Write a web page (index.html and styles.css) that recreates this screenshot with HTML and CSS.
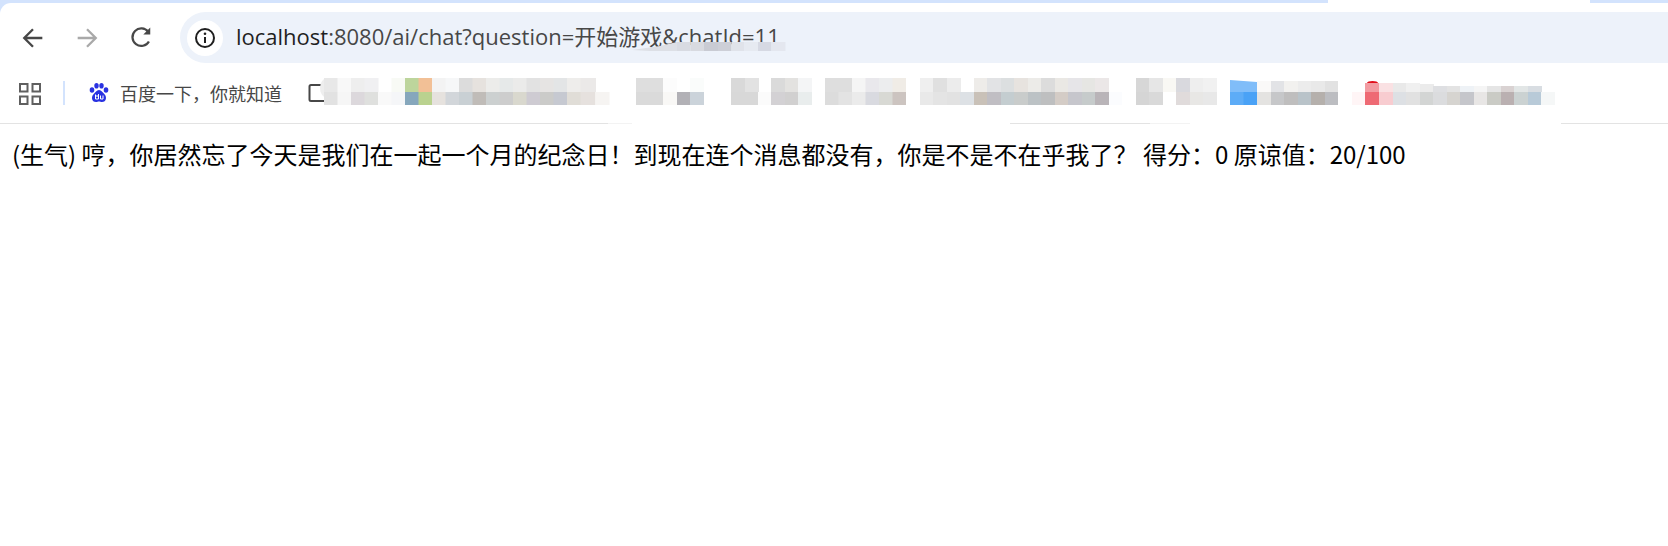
FILE: index.html
```html
<!DOCTYPE html>
<html lang="zh-CN">
<head>
<meta charset="utf-8">
<title>localhost:8080/ai/chat</title>
<link rel="stylesheet" href="styles.css">
</head>
<body>
<header class="chrome">
  <div class="tabstrip"><span class="strip-a"></span><span class="strip-gap"></span><span class="strip-b"></span></div>
  <div class="panel">
    <div class="toolbar">
      <button class="nav"><svg viewBox="0 0 24 24" width="28" height="28"><path d="M20 12H5M12 4.5 4.5 12l7.500 7.500" fill="none" stroke="#474747" stroke-width="2"/></svg></button>
      <button class="nav"><svg viewBox="0 0 24 24" width="28" height="28"><path d="M4 12h15M12 4.500l7.500 7.500-7.500 7.500" fill="none" stroke="#a9a9a9" stroke-width="2"/></svg></button>
      <button class="nav"><svg viewBox="0 0 24 24" width="27" height="27"><path d="M18.600 15.500A7.800 7.800 0 1 1 18 7" fill="none" stroke="#474747" stroke-width="2"/><path d="M19.800 3.200v6.200h-6.200z" fill="#474747"/></svg></button>
      <div class="omnibox">
        <span class="site-info"><svg viewBox="0 0 24 24" width="24" height="24"><circle cx="12" cy="12" r="9" fill="none" stroke="#1f1f1f" stroke-width="2"/><path d="M12 11v6" stroke="#1f1f1f" stroke-width="2"/><circle cx="12" cy="7.800" r="1.300" fill="#1f1f1f"/></svg></span>
        <span class="url"><span class="host">localhost</span>:8080/ai/chat?question=开始游戏&amp;chatId=11</span>
        <svg class="url-mosaic" viewBox="632 42 154 9" width="154" height="9">
          <polygon points="632,50 660,46 677,42 677,51 650,51" fill="#dde0e6"/>
          <rect x="677" y="42" width="13.500" height="9" fill="#d8dbe2"/>
          <rect x="690.500" y="42" width="13.500" height="9" fill="#d8dae0"/>
          <rect x="704" y="42" width="14" height="9" fill="#c9cbd3"/>
          <rect x="718" y="42" width="13.500" height="9" fill="#cdcfd7"/>
          <rect x="731.500" y="42" width="13" height="9" fill="#e0e3ea"/>
          <rect x="744.500" y="42" width="13.500" height="9" fill="#e6eaf1"/>
          <rect x="758" y="42" width="13.500" height="9" fill="#d6d9e3"/>
          <rect x="771.500" y="42" width="14" height="9" fill="#e4e7ef"/>
        </svg>
      </div>
    </div>
    <nav class="bookmarks">
      <svg class="apps" viewBox="0 0 22 22" width="22" height="22"><g fill="none" stroke="#5f5f5f" stroke-width="2"><rect x="1" y="1" width="7.500" height="7.500"/><rect x="13.500" y="1" width="7.500" height="7.500"/><rect x="1" y="13.500" width="7.500" height="7.500"/><rect x="13.500" y="13.500" width="7.500" height="7.500"/></g></svg>
      <span class="divider"></span>
      <a class="bookmark">
        <svg class="paw" viewBox="0 0 20 20" width="20" height="20"><g fill="#2932e1"><ellipse cx="3" cy="7" rx="2.300" ry="2.800"/><ellipse cx="7.500" cy="2.800" rx="2.200" ry="2.800"/><ellipse cx="12.500" cy="2.800" rx="2.200" ry="2.800"/><ellipse cx="17" cy="7" rx="2.300" ry="2.800"/><path d="M10 7c2.500 0 3.500 2.500 5.500 4.200 2.500 2.200 2 7.800-2.500 7.800-1.300 0-2-.5-3-.5s-1.700.5-3 .5c-4.500 0-5-5.600-2.500-7.800C6.500 9.500 7.500 7 10 7z"/></g><path d="M6.500 11.500v4.500h3v-5M6.500 13h3M11.500 12.500v3.500h2.500v-3.500" fill="none" stroke="#fff" stroke-width="1"/></svg>
        百度一下，你就知道
      </a>
      <svg class="mosaic" viewBox="300 76 1270 32" width="1270" height="32">
        <path d="M330 85h-19a1.500 1.500 0 0 0-1.500 1.500v13a1.500 1.500 0 0 0 1.500 1.500h19" fill="none" stroke="#474747" stroke-width="2"/>
        <ellipse cx="327" cy="88" rx="7" ry="10" fill="#eeeeee"/>
        <g>
          <rect x="324" y="78" width="14" height="14" fill="#e8e8e8"/><rect x="337.500" y="78" width="14" height="14" fill="#f8f8f8"/><rect x="351" y="78" width="14" height="14" fill="#eeeeee"/><rect x="364.500" y="78" width="14" height="14" fill="#f0f0f2"/><rect x="391.500" y="78" width="14" height="14" fill="#f8faf5"/><rect x="405" y="78" width="14" height="14" fill="#bdd59c"/><rect x="418.500" y="78" width="14" height="14" fill="#f2c096"/><rect x="432" y="78" width="14" height="14" fill="#f3f3f3"/><rect x="445.500" y="78" width="14" height="14" fill="#f6f7f8"/><rect x="459" y="78" width="14" height="14" fill="#dcdcdc"/><rect x="472.500" y="78" width="14" height="14" fill="#e6e2de"/><rect x="486" y="78" width="14" height="14" fill="#ececea"/><rect x="499.500" y="78" width="14" height="14" fill="#e6e9e9"/><rect x="513" y="78" width="14" height="14" fill="#ebebea"/><rect x="526.500" y="78" width="14" height="14" fill="#e2e2e2"/><rect x="540" y="78" width="14" height="14" fill="#e6e4e3"/><rect x="553.500" y="78" width="14" height="14" fill="#e3e5e6"/><rect x="567" y="78" width="14" height="14" fill="#eeedeb"/><rect x="580.500" y="78" width="15.500" height="14" fill="#ebe9e8"/>
          <rect x="636" y="78" width="27" height="14" fill="#dedede"/><rect x="663" y="78" width="14" height="14" fill="#fcfcfc"/><rect x="690" y="78" width="14" height="14" fill="#fafcfb"/>
          <rect x="731" y="78" width="14" height="14" fill="#d9d9d9"/><rect x="745" y="78" width="14" height="14" fill="#e2e2e2"/><rect x="771" y="78" width="14" height="14" fill="#dadada"/><rect x="785" y="78" width="14" height="14" fill="#e3e2e0"/><rect x="798" y="78" width="14" height="14" fill="#f4f5f6"/>
          <rect x="825" y="78" width="27" height="14" fill="#dedede"/><rect x="852" y="78" width="14" height="14" fill="#f5f5f5"/><rect x="865.500" y="78" width="14" height="14" fill="#e9e8ec"/><rect x="879" y="78" width="14" height="14" fill="#ecedee"/><rect x="892.500" y="78" width="13.500" height="14" fill="#f0ece6"/>
          <rect x="920" y="78" width="13.500" height="14" fill="#efefef"/><rect x="933" y="78" width="14" height="14" fill="#e0e0e0"/><rect x="947" y="78" width="14" height="14" fill="#ececec"/><rect x="974" y="78" width="13.500" height="14" fill="#eeece9"/><rect x="987" y="78" width="14" height="14" fill="#e2e3e5"/><rect x="1001" y="78" width="14" height="14" fill="#dcdfe0"/><rect x="1014" y="78" width="14" height="14" fill="#e7e3df"/><rect x="1028" y="78" width="14" height="14" fill="#ecebe8"/><rect x="1041" y="78" width="14" height="14" fill="#dcdcdc"/><rect x="1055" y="78" width="14" height="14" fill="#eae8e4"/><rect x="1068" y="78" width="14" height="14" fill="#e6e5e8"/><rect x="1082" y="78" width="14" height="14" fill="#e6e6e3"/><rect x="1095" y="78" width="14" height="14" fill="#ebe7e7"/>
          <rect x="1136" y="78" width="13.500" height="14" fill="#d7d7d7"/><rect x="1149" y="78" width="14" height="14" fill="#e6e6e6"/><rect x="1163" y="78" width="13.500" height="14" fill="#f9f8f4"/><rect x="1176" y="78" width="14" height="14" fill="#d9d9de"/><rect x="1190" y="78" width="13.500" height="14" fill="#eeeeee"/><rect x="1203" y="78" width="14" height="14" fill="#f1f1f1"/>
          <polygon points="1230,80 1257,82 1257,92 1230,92" fill="#80bdf9"/>
          <rect x="1257" y="81" width="14" height="11" fill="#faf9f8"/><rect x="1271" y="81" width="13.500" height="11" fill="#e2e3e6"/><rect x="1284" y="81" width="14" height="11" fill="#f2f1ef"/><rect x="1298" y="81" width="13.500" height="11" fill="#ececec"/><rect x="1311" y="81" width="14" height="11" fill="#e9e9e9"/><rect x="1325" y="81" width="13" height="11" fill="#e2e2e2"/>
          <path d="M1367 83a5.500 2 0 0 1 11 0z" fill="#e1101c"/>
          <rect x="1365" y="83" width="14" height="9" fill="#f29ca2"/><rect x="1379" y="83" width="14" height="9" fill="#fae1e3"/><rect x="1393" y="83" width="14" height="9" fill="#e9e9e9"/><rect x="1406" y="83" width="14" height="9" fill="#f0f0f0"/><rect x="1420" y="84" width="14" height="8" fill="#ebebeb"/><rect x="1433" y="86" width="14" height="6" fill="#dedfe2"/><rect x="1447" y="86" width="14" height="6" fill="#e3e3e3"/><rect x="1460" y="86" width="14" height="6" fill="#eef2f6"/><rect x="1474" y="86" width="14" height="6" fill="#f5f5f5"/><rect x="1487" y="86" width="14" height="6" fill="#e5e5e5"/><rect x="1501" y="86" width="14" height="6" fill="#d9d2d2"/><rect x="1514" y="86" width="14" height="6" fill="#e2e6e6"/><rect x="1528" y="86" width="14" height="6" fill="#d8dde2"/>
        </g>
        <g>
          <rect x="324" y="92" width="14" height="13" fill="#e2e2e2"/><rect x="337.500" y="92" width="14" height="13" fill="#f6f6f6"/><rect x="351" y="92" width="14" height="13" fill="#dcd8dc"/><rect x="364.500" y="92" width="14" height="13" fill="#dfe0de"/><rect x="378" y="92" width="14" height="13" fill="#f9f9f9"/><rect x="391.500" y="92" width="14" height="13" fill="#f5f6f8"/><rect x="405" y="92" width="14" height="13" fill="#86a7bc"/><rect x="418.500" y="92" width="14" height="13" fill="#bad28f"/><rect x="432" y="92" width="14" height="13" fill="#e6e2de"/><rect x="445.500" y="92" width="14" height="13" fill="#d2d6da"/><rect x="459" y="92" width="14" height="13" fill="#c9d0d4"/><rect x="472.500" y="92" width="14" height="13" fill="#c0bcb8"/><rect x="486" y="92" width="14" height="13" fill="#ccd0d0"/><rect x="499.500" y="92" width="14" height="13" fill="#cdcdcd"/><rect x="513" y="92" width="14" height="13" fill="#d9d8ce"/><rect x="526.500" y="92" width="14" height="13" fill="#cecbd2"/><rect x="540" y="92" width="14" height="13" fill="#cbcbc9"/><rect x="553.500" y="92" width="14" height="13" fill="#c6c9d1"/><rect x="567" y="92" width="14" height="13" fill="#e0ddd7"/><rect x="580.500" y="92" width="15" height="13" fill="#e6e1de"/><rect x="595.500" y="92" width="14" height="13" fill="#f6f4f2"/>
          <rect x="636" y="92" width="27" height="13" fill="#dadada"/><rect x="663" y="92" width="14" height="13" fill="#f9f8f6"/><rect x="677" y="92" width="13.500" height="13" fill="#b2b1b6"/><rect x="690" y="92" width="14" height="13" fill="#cbd3da"/>
          <rect x="731" y="92" width="27" height="13" fill="#d8d8d8"/><rect x="758" y="92" width="13" height="13" fill="#fbfbfb"/><rect x="771" y="92" width="14" height="13" fill="#d3d1d4"/><rect x="785" y="92" width="14" height="13" fill="#d1d0d0"/><rect x="798" y="92" width="14" height="13" fill="#e9eded"/>
          <rect x="825" y="92" width="14" height="13" fill="#dcdcdc"/><rect x="838.500" y="92" width="14" height="13" fill="#e3e3e3"/><rect x="852" y="92" width="14" height="13" fill="#ebebeb"/><rect x="865.500" y="92" width="14" height="13" fill="#d9dae0"/><rect x="879" y="92" width="14" height="13" fill="#d8d9d4"/><rect x="892.500" y="92" width="13.500" height="13" fill="#ccc4c0"/>
          <rect x="920" y="92" width="13.500" height="13" fill="#e9e9e9"/><rect x="933" y="92" width="14" height="13" fill="#e4e4e4"/><rect x="947" y="92" width="14" height="13" fill="#e2e2e2"/><rect x="960" y="92" width="14" height="13" fill="#dde1e5"/><rect x="974" y="92" width="13.500" height="13" fill="#c9c1b8"/><rect x="987" y="92" width="14" height="13" fill="#c0bec3"/><rect x="1001" y="92" width="14" height="13" fill="#c4cdd0"/><rect x="1014" y="92" width="14" height="13" fill="#c9cccb"/><rect x="1028" y="92" width="14" height="13" fill="#bcc2c5"/><rect x="1041" y="92" width="14" height="13" fill="#bebfc0"/><rect x="1055" y="92" width="14" height="13" fill="#d4ccc6"/><rect x="1068" y="92" width="14" height="13" fill="#c6c6cc"/><rect x="1082" y="92" width="14" height="13" fill="#c6cbcb"/><rect x="1095" y="92" width="14" height="13" fill="#b9b4b8"/><rect x="1109" y="92" width="13" height="13" fill="#fbfcfe"/>
          <rect x="1136" y="92" width="13.500" height="13" fill="#d5d5d5"/><rect x="1149" y="92" width="14" height="13" fill="#d9d9d9"/><rect x="1176" y="92" width="14" height="13" fill="#e0dbdb"/><rect x="1190" y="92" width="13.500" height="13" fill="#e8e7e5"/><rect x="1203" y="92" width="14" height="13" fill="#e8e8e8"/>
          <rect x="1230" y="92" width="14" height="13" fill="#5dacf7"/><rect x="1243.500" y="92" width="14" height="13" fill="#4aa2f6"/><rect x="1257" y="92" width="14" height="13" fill="#e4e3e1"/><rect x="1271" y="92" width="13.500" height="13" fill="#c6c7c9"/><rect x="1284" y="92" width="14" height="13" fill="#bfbebe"/><rect x="1298" y="92" width="13.500" height="13" fill="#b9c3c9"/><rect x="1311" y="92" width="14" height="13" fill="#b5b0ac"/><rect x="1325" y="92" width="13" height="13" fill="#bcbdc1"/>
          <rect x="1352" y="92" width="13" height="13" fill="#fff5f6"/><rect x="1365" y="92" width="14" height="13" fill="#ee6a74"/><rect x="1379" y="92" width="14" height="13" fill="#f8ccd0"/><rect x="1393" y="92" width="14" height="13" fill="#dde0e4"/><rect x="1406" y="92" width="14" height="13" fill="#e1e1e1"/><rect x="1420" y="92" width="14" height="13" fill="#d3d5d4"/><rect x="1433" y="92" width="14" height="13" fill="#dbdcde"/><rect x="1447" y="92" width="14" height="13" fill="#d6d4d0"/><rect x="1460" y="92" width="14" height="13" fill="#c5c6cb"/><rect x="1474" y="92" width="14" height="13" fill="#e8e6e5"/><rect x="1487" y="92" width="14" height="13" fill="#cacbc5"/><rect x="1501" y="92" width="14" height="13" fill="#bab0b1"/><rect x="1514" y="92" width="14" height="13" fill="#cbd2d2"/><rect x="1528" y="92" width="14" height="13" fill="#b8cad8"/><rect x="1541" y="92" width="14" height="13" fill="#f5f7f7"/>
        </g>
      </svg>
    </nav>
  </div>
  <div class="rule"></div>
</header>
<main class="page">
  <p class="reply">(生气) 哼，你居然忘了今天是我们在一起一个月的纪念日！到现在连个消息都没有，你是不是不在乎我了？ 得分：0 原谅值：20/100</p>
</main>
</body>
</html>
```

FILE: styles.css
```css
* { box-sizing: border-box; }
html, body { margin: 0; padding: 0; background: #fff; }
body { width: 1668px; height: 546px; overflow: hidden; font-family: "Noto Sans CJK SC", "Noto Sans", sans-serif; }

.chrome { background: #fff; }
.tabstrip { display: flex; height: 3px; }
.strip-a { width: 1328px; background: #d3e3fd; }
.strip-gap { width: 262px; background: #fff; }
.strip-b { flex: 1; background: #d3e3fd; }

.panel { background: #d3e3fd; }
.toolbar {
  display: flex;
  align-items: center;
  height: 63px;
  padding: 9px 0 3px 6px;
  background: #fff;
  border-top-left-radius: 11px;
}
.nav {
  display: flex;
  align-items: center;
  justify-content: center;
  width: 54px;
  height: 51px;
  padding: 0;
  border: 0;
  background: none;
}
.omnibox {
  position: relative;
  display: flex;
  flex: 1;
  align-items: center;
  height: 51px;
  margin-left: 12px;
  padding-left: 7px;
  background: #edf2fa;
  border-radius: 26px 0 0 26px;
}
.site-info {
  display: flex;
  align-items: center;
  justify-content: center;
  width: 36px;
  height: 36px;
  background: #fff;
  border-radius: 50%;
}
.url {
  margin: 0 0 3px 13px;
  font-family: "Open Sans", "Noto Sans CJK SC", sans-serif;
  font-size: 22px;
  line-height: 28px;
  color: #474747;
  white-space: nowrap;
}
.host { color: #1f1f1f; }
.url-mosaic { position: absolute; left: 452px; top: 30px; }

.bookmarks {
  display: flex;
  align-items: center;
  height: 57px;
  padding: 0 0 5px 19px;
  background: #fff;
}
.apps { flex: none; margin-top: 3px; }
.divider { width: 2px; height: 24px; margin: 2px 24px 0 22px; background: #d3e3fd; flex: none; }
.bookmark {
  display: flex;
  align-items: center;
  flex: none;
  gap: 11px;
  margin-top: 2px;
  font-size: 18px;
  color: #474747;
  white-space: nowrap;
}
.mosaic { flex: none; margin-left: 18px; }

.rule {
  height: 1px;
  background: linear-gradient(to right, #e3e3e3 608px, #f3f3f3 608px, #f3f3f3 632px, #fff 632px, #fff 1010px, #e3e3e3 1010px, #e3e3e3 1150px, #f3f3f3 1150px, #f3f3f3 1190px, #fff 1190px, #fff 1561px, #e3e3e3 1561px);
}

.page { padding: 0 12px; }
.reply { margin: 12px 0 0; font-size: 24px; line-height: 36px; color: #000; white-space: nowrap; }
```
